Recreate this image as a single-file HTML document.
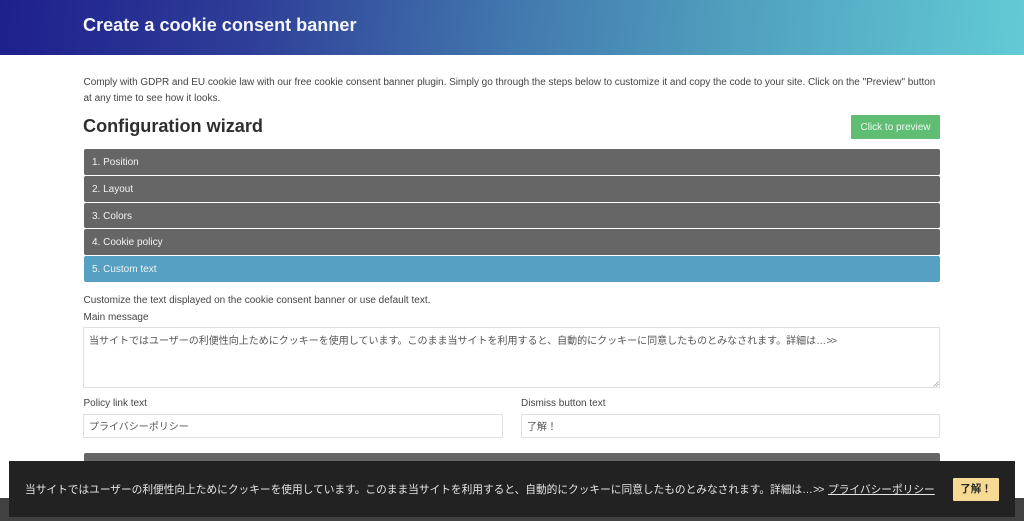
<!DOCTYPE html>
<html lang="en">
<head>
<meta charset="utf-8">
<title>Create a cookie consent banner</title>
<style>
html,body{margin:0;padding:0;background:#fff;}
body{width:1024px;height:521px;overflow:hidden;position:relative;font-family:"Liberation Sans","Noto Sans CJK JP",sans-serif;color:#444;}
.a{position:absolute;white-space:nowrap;}
.hdr{left:0;top:0;width:1024px;height:54.5px;background:linear-gradient(97deg,#1e1f8c 0%,#2f3f98 25%,#4278ae 50%,#4f9dbd 70%,#62cbd5 100%);}
.bar{left:84px;width:856px;height:26px;background:#666;border-radius:2px;color:#f2f2f2;font-size:10px;line-height:27px;text-indent:8px;}
.txt{font-size:10px;line-height:14px;color:#444;}
.box{background:#fff;border:1px solid #e0e0e0;box-sizing:border-box;border-radius:1px;font-size:10px;color:#555;padding-left:5px;}
</style>
</head>
<body>
<div class="a hdr"></div>
<div class="a" style="left:83px;top:13px;font-size:18.1px;line-height:24px;font-weight:bold;color:#f4f6fb;">Create a cookie consent banner</div>

<div class="a txt" style="left:83.5px;top:75.5px;letter-spacing:-.03px;">Comply with GDPR and EU cookie law with our free cookie consent banner plugin. Simply go through the steps below to customize it and copy the code to your site. Click on the "Preview" button</div>
<div class="a txt" style="left:83.5px;top:91.5px;">at any time to see how it looks.</div>

<div class="a" style="left:83px;top:113px;font-size:18.1px;line-height:26px;font-weight:bold;color:#2f2f2f;">Configuration wizard</div>
<div class="a" style="left:851px;top:115px;width:89px;height:24px;background:#5fbd74;border-radius:1px;color:#eef8f0;font-size:10px;line-height:26px;text-align:center;">Click to preview</div>

<div class="a bar" style="top:149px;">1. Position</div>
<div class="a bar" style="top:176px;height:25.5px;">2. Layout</div>
<div class="a bar" style="top:203px;height:25px;">3. Colors</div>
<div class="a bar" style="top:229px;">4. Cookie policy</div>
<div class="a bar" style="top:255.5px;background:#55a0c3;">5. Custom text</div>

<div class="a txt" style="left:83.5px;top:294px;">Customize the text displayed on the cookie consent banner or use default text.</div>
<div class="a txt" style="left:83.5px;top:311px;">Main message</div>

<div class="a box" style="left:83px;top:327px;width:857px;height:61px;line-height:28px;">当サイトではユーザーの利便性向上ためにクッキーを使用しています。このまま当サイトを利用すると、自動的にクッキーに同意したものとみなされます。詳細は<span style="letter-spacing:-1.2px;">… &gt;&gt;</span></div>
<svg class="a" style="left:933px;top:381px;" width="6" height="6" viewBox="0 0 6 6"><path d="M0.5 5.5 5.5 .5M3 5.5 5.5 3" stroke="#999" stroke-width=".7" fill="none"/></svg>

<div class="a txt" style="left:83.5px;top:397px;">Policy link text</div>
<div class="a txt" style="left:521px;top:397px;">Dismiss button text</div>
<div class="a box" style="left:83px;top:413.5px;width:420px;height:24.5px;line-height:25px;">プライバシーポリシー</div>
<div class="a box" style="left:521px;top:413.5px;width:419px;height:24.5px;line-height:25px;">了解！</div>

<div class="a" style="left:84px;top:453px;width:856px;height:20px;background:#666;border-radius:2px;"></div>
<div class="a" style="left:0;top:498px;width:1024px;height:23px;background:#414141;"></div>
<div class="a" style="left:8.5px;top:461px;width:1006.5px;height:56px;background:#222;"></div>
<div class="a" style="left:25px;top:483px;font-size:10.7px;line-height:14px;color:#e6e6e6;">当サイトではユーザーの利便性向上ためにクッキーを使用しています。このまま当サイトを利用すると、自動的にクッキーに同意したものとみなされます。詳細は<span style="letter-spacing:-1.3px;">… &gt;&gt;</span> <span style="text-decoration:underline;margin-left:2px;">プライバシーポリシー</span></div>
<div class="a" style="left:953px;top:477.5px;width:46px;height:23.5px;background:#f6d992;border-radius:1px;color:#2a2a2a;font-size:10.5px;font-weight:bold;line-height:23.5px;text-align:center;">了解！</div>
</body>
</html>
